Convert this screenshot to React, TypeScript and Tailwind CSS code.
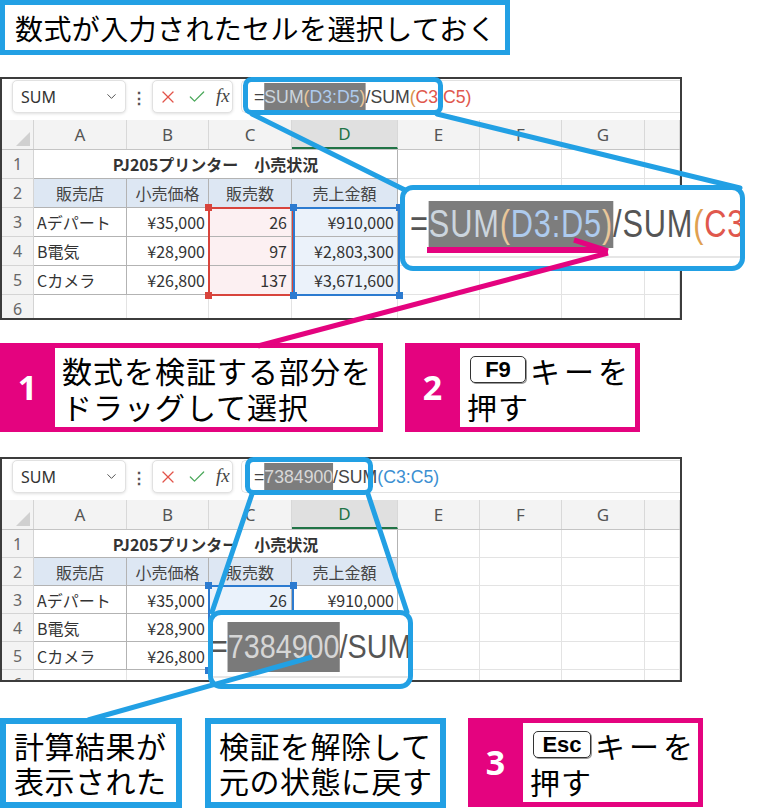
import { Check, ChevronDown, X } from 'lucide-react';
import type { ReactNode } from 'react';

const DATA = [
  ['Aデパート', '¥35,000', '26', '¥910,000'],
  ['B電気', '¥28,900', '97', '¥2,803,300'],
  ['Cカメラ', '¥26,800', '137', '¥3,671,600'],
];
const LETTERS = ['A', 'B', 'C', 'D', 'E', 'F', 'G', ''];
const COLS = 'grid grid-cols-[32px_93px_82px_83px_106px_82px_82px_83px_1fr]';

function FormulaBar({ v }: { v: 1 | 2 }) {
  return (
    <div className="flex h-[41px] pt-px">
      <div className="ml-[10px] flex h-[33px] w-[114px] items-center justify-between rounded-[5px] border border-[#e1e1e1] bg-white pl-[8px] pr-[6px] shadow-[0_1px_3px_rgba(0,0,0,0.12)]">
        <span className="font-['Noto_Sans'] text-[16px] text-[#333]">SUM</span>
        <ChevronDown size={15} strokeWidth={1.6} className="text-[#555]" />
      </div>
      <div className="flex h-[33px] w-[26px] items-center justify-center text-[16px] font-bold text-[#555]">⋮</div>
      <div className="flex h-[33px] w-[81px] items-center gap-[9px] rounded-[5px] border border-[#e1e1e1] bg-white pl-[5px] shadow-[0_1px_3px_rgba(0,0,0,0.12)]">
        <X size={20} strokeWidth={1.5} className="text-[#e2544a]" />
        <Check size={20} strokeWidth={1.5} className="text-[#4aa85a]" />
        <span className="font-['Liberation_Serif'] text-[19px] italic text-[#444]">fx</span>
      </div>
      <div className="ml-[8px] flex h-[33px] flex-1 items-center rounded-l-[5px] border border-r-0 border-[#e1e1e1] bg-white pl-[12px]">
        {v === 1 ? (
          <div className="origin-left scale-x-[0.93] whitespace-nowrap font-['Liberation_Sans'] text-[19px] leading-[27px] text-[#444]">
            =<span className="inline-block h-[27px] bg-[#7d7d7d] align-top">
              <span className="text-[#ccd5de]">SUM</span>
              <span className="text-[#e9c79a]">(</span>
              <span className="text-[#aecbee]">D3:D5</span>
              <span className="text-[#e9c79a]">)</span>
            </span>
            /SUM<span className="text-[#d9944e]">(</span>
            <span className="text-[#e0584d]">C3:C5)</span>
          </div>
        ) : (
          <div className="origin-left scale-x-[0.93] whitespace-nowrap font-['Liberation_Sans'] text-[19px] leading-[27px] text-[#444]">
            =<span className="inline-block h-[27px] bg-[#7d7d7d] align-top text-[#d8d8d8]">7384900</span>
            /SUM<span className="text-[#3b8fd2]">(C3:C5)</span>
          </div>
        )}
      </div>
    </div>
  );
}

function Handles({ color }: { color: string }) {
  return (
    <>
      <div className={`absolute -left-[5px] -top-[5px] h-[7px] w-[7px] ${color}`} />
      <div className={`absolute -right-[5px] -top-[5px] h-[7px] w-[7px] ${color}`} />
      <div className={`absolute -bottom-[5px] -left-[5px] h-[7px] w-[7px] ${color}`} />
      <div className={`absolute -bottom-[5px] -right-[5px] h-[7px] w-[7px] ${color}`} />
    </>
  );
}

function Excel({ v }: { v: 1 | 2 }) {
  const rowH = v === 1 ? 'h-[29px]' : 'h-[28px]';
  const num = 'flex items-center justify-center border-b border-r border-[#d4d4d4] bg-[#f3f3f3] font-[\'Noto_Sans\'] text-[16px] text-[#666]';
  const empty = 'border-b border-r border-[#e3e3e3]';
  const tb = 'flex items-center border-b border-r border-[#b3b3b3] text-[16px] text-[#333] leading-none';
  const cFill = v === 1 ? 'bg-[#fcf0f2]' : 'bg-[#eaf2fb]';
  const dFill = v === 1 ? 'bg-[#ebf2fa]' : '';

  return (
    <div className={`w-[682px] overflow-hidden border-2 border-[#3c3c3c] bg-white ${v === 1 ? 'h-[243px]' : 'h-[225px]'}`}>
      <FormulaBar v={v} />
      {/* column header */}
      <div className={`${COLS} h-[30px] border-b border-[#c4c4c4] bg-[#f3f3f3]`}>
        <div className="relative border-r border-[#d4d4d4]">
          <svg className="absolute bottom-[3px] right-[3px]" width="14" height="14" viewBox="0 0 14 14">
            <path d="M14 0 L14 14 L0 14 Z" fill="#d0d0d0" />
          </svg>
        </div>
        {LETTERS.map((l, i) => (
          <div
            key={i}
            className={`flex items-center justify-center border-r border-[#d8d8d8] font-['Noto_Sans'] text-[17px] ${
              l === 'D' ? 'border-b-2 border-b-[#217346] bg-[#e0e0e0] text-[#217346]' : 'text-[#555]'
            }`}
          >
            {l}
          </div>
        ))}
      </div>
      {/* body */}
      <div className="relative">
        <div className={`${COLS} ${rowH}`}>
          <div className={num}>1</div>
          <div className={`${tb} col-span-4 justify-center font-bold text-[#222]`}>PJ205プリンター　小売状況</div>
          <div className={empty} />
          <div className={empty} />
          <div className={empty} />
          <div className={empty} />
        </div>
        <div className={`${COLS} ${rowH}`}>
          <div className={num}>2</div>
          {['販売店', '小売価格', '販売数', '売上金額'].map((h) => (
            <div key={h} className={`${tb} justify-center bg-[#dde7f3] text-[#444]`}>
              {h}
            </div>
          ))}
          <div className={empty} />
          <div className={empty} />
          <div className={empty} />
          <div className={empty} />
        </div>
        {DATA.map((r, i) => (
          <div key={i} className={`${COLS} ${rowH}`}>
            <div className={num}>{i + 3}</div>
            <div className={`${tb} pl-[3px]`}>{r[0]}</div>
            <div className={`${tb} justify-end pr-[3px]`}>{r[1]}</div>
            <div className={`${tb} justify-end pr-[4px] ${cFill}`}>{r[2]}</div>
            <div className={`${tb} justify-end pr-[3px] ${dFill}`}>{r[3]}</div>
            <div className={empty} />
            <div className={empty} />
            <div className={empty} />
            <div className={empty} />
          </div>
        ))}
        <div className={`${COLS} ${rowH}`}>
          <div className={num}>6</div>
          {LETTERS.map((_, i) => (
            <div key={i} className={empty} />
          ))}
        </div>

        {v === 1 ? (
          <>
            <div className="absolute left-[206px] top-[57px] h-[89px] w-[86px] border-2 border-[#d8443c]">
              <Handles color="bg-[#d8443c]" />
            </div>
            <div className="absolute left-[291px] top-[57px] h-[89px] w-[107px] border-2 border-[#2c7bd0]">
              <Handles color="bg-[#2c7bd0]" />
            </div>
          </>
        ) : (
          <div className="absolute left-[206px] top-[55px] h-[86px] w-[86px] border-2 border-[#2c7bd0]">
            <Handles color="bg-[#2c7bd0]" />
          </div>
        )}
      </div>
    </div>
  );
}

function Key({ children, w }: { children: ReactNode; w: string }) {
  return (
    <span className={`inline-flex h-[27px] ${w} items-center justify-center rounded-[5px] border-[1.5px] border-[#333] font-['Liberation_Sans'] text-[22px] font-bold leading-none tracking-[0px] shadow-[1px_1px_0_#999]`}>
      {children}
    </span>
  );
}

function Step({ n, w, children }: { n: string; w: string; children: ReactNode }) {
  return (
    <div className={`flex h-[89px] ${w} bg-[#e4037f] py-[5px] pr-[5px]`}>
      <div className="flex w-[55px] items-center justify-center font-['Noto_Sans'] text-[34px] font-bold text-white">{n}</div>
      <div className="flex flex-1 flex-col justify-center bg-white pl-[7px] text-[30px] leading-[36px] tracking-[1px] text-black">
        {children}
      </div>
    </div>
  );
}

function Note({ w, children }: { w: string; children: ReactNode }) {
  return (
    <div className={`flex h-[90px] ${w} flex-col justify-center border-[6px] border-[#22a0e4] bg-white pl-[8px] text-[30px] leading-[35px] tracking-[0.5px] text-black`}>
      {children}
    </div>
  );
}

export default function App() {
  return (
    <div className="relative h-[808px] w-[783px] overflow-hidden bg-white font-['Noto_Sans_CJK_JP',sans-serif]">
      <div className="flex h-[55px] w-[510px] items-center border-[5px] border-[#22a0e4] pl-[10px] text-[28px] leading-none tracking-[0.4px] text-black">
        数式が入力されたセルを選択しておく
      </div>

      <div className="mt-[22px]">
        <Excel v={1} />
      </div>

      <div className="mt-[23px] flex gap-[22px]">
        <Step n="1" w="w-[383px]">
          <div>数式を検証する部分を</div>
          <div>ドラッグして選択</div>
        </Step>
        <Step n="2" w="w-[235px]">
          <div className="flex items-center pl-[3px]">
            <Key w="w-[56px]">F9</Key>
            <span className="ml-[4px] tracking-[4px]">キーを</span>
          </div>
          <div>押す</div>
        </Step>
      </div>

      <div className="mt-[25px]">
        <Excel v={2} />
      </div>

      <div className="mt-[36px] flex">
        <Note w="w-[182px]">
          <div>計算結果が</div>
          <div>表示された</div>
        </Note>
        <div className="ml-[23px]">
          <Note w="w-[241px]">
            <div>検証を解除して</div>
            <div>元の状態に戻す</div>
          </Note>
        </div>
        <div className="ml-[22px]">
          <Step n="3" w="w-[235px]">
            <div className="flex items-center pl-[3px]">
              <Key w="w-[58px]">Esc</Key>
              <span className="ml-[4px] tracking-[4px]">キーを</span>
            </div>
            <div>押す</div>
          </Step>
        </div>
      </div>

      {/* magnified formula, first sheet */}
      <div className="absolute left-[400px] top-[185px] h-[86px] w-[345px] overflow-hidden rounded-[13px] border-[5px] border-[#22a0e4] bg-white">
        <div className="pl-[5px] pt-[11px]">
          <div className="origin-left scale-x-[0.81] whitespace-nowrap font-['Liberation_Sans'] text-[38px] leading-[47px] tracking-[1px] text-[#555]">
            =<span className="inline-block h-[47px] bg-[#7d7d7d] align-top">
              <span className="text-[#ccd5de]">SUM</span>
              <span className="text-[#e9c79a]">(</span>
              <span className="text-[#aecbee]">D3:D5</span>
              <span className="text-[#e9c79a]">)</span>
            </span>
            /SUM<span className="text-[#e0a050]">(</span>
            <span className="text-[#e0584d]">C3:C5)</span>
          </div>
        </div>
        <div className="mt-[8px] h-[2px] bg-[#e6e6e6]" />
      </div>

      {/* magnified formula, second sheet */}
      <div className="absolute left-[208px] top-[610px] h-[79px] w-[205px] overflow-hidden rounded-[13px] border-[5px] border-[#22a0e4] bg-white">
        <div className="-ml-[2px] pt-[7px]">
          <div className="origin-left scale-x-[0.87] whitespace-nowrap font-['Liberation_Sans'] text-[33px] leading-[50px] text-[#555]">
            =<span className="inline-block h-[50px] bg-[#7a7a7a] align-top text-[#d6d6d6]">7384900</span>/SUM
          </div>
        </div>
        <div className="mt-[4px] h-[2px] bg-[#e6e6e6]" />
      </div>

      {/* annotation strokes */}
      <svg className="pointer-events-none absolute left-0 top-0" width="783" height="808" viewBox="0 0 783 808">
        <g fill="none" stroke="#22a0e4" strokeWidth="5" strokeLinecap="round">
          <rect x="245.5" y="79.5" width="195" height="33" rx="6" />
          <line x1="252" y1="114" x2="405" y2="190" />
          <line x1="437" y1="114" x2="740" y2="188" />
          <rect x="247.5" y="459.5" width="123" height="33" rx="6" />
          <line x1="252" y1="494" x2="212" y2="612" />
          <line x1="368" y1="494" x2="407" y2="612" />
          <line x1="312" y1="657" x2="88" y2="720" strokeLinecap="butt" />
        </g>
        <g fill="none" stroke="#e4037f">
          <line x1="427" y1="250" x2="604" y2="250" strokeWidth="6" />
          <line x1="574" y1="240" x2="608" y2="251" strokeWidth="5" />
          <line x1="608" y1="253" x2="258" y2="346" strokeWidth="5" />
        </g>
      </svg>
    </div>
  );
}
